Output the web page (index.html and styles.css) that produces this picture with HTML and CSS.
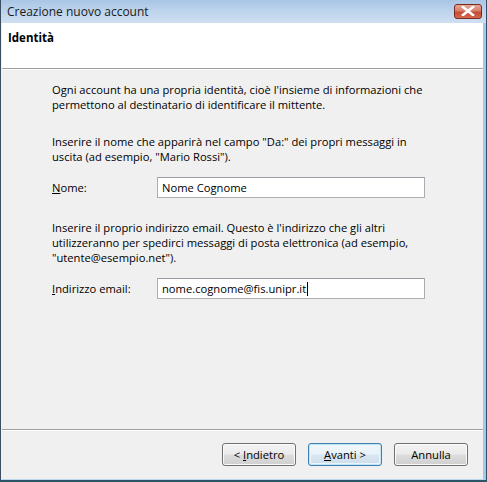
FILE: index.html
```html
<!DOCTYPE html>
<html lang="it">
<head>
<meta charset="utf-8">
<title>Creazione nuovo account</title>
<link rel="stylesheet" href="styles.css">
</head>
<body>
<div class="window">
  <div class="titlebar">
    <span class="title">Creazione nuovo account</span>
    <span class="close" aria-label="Chiudi">
      <svg width="14" height="10" viewBox="0 0 14 10"><path d="M2 1 L12 9 M12 1 L2 9" stroke="#ffffff" stroke-width="2.6" stroke-linecap="square" fill="none"/></svg>
    </span>
  </div>
  <div class="frame">
    <div class="client">
      <div class="header">Identità</div>
      <div class="content">
        <p class="para first">Ogni account ha una propria identità, cioè l'insieme di informazioni che<br>permettono al destinatario di identificare il mittente.</p>
        <p class="para">Inserire il nome che apparirà nel campo "Da:" dei propri messaggi in<br>uscita (ad esempio, "Mario Rossi").</p>
        <div class="field">
          <label class="label"><u>N</u>ome:</label>
          <div class="input">Nome Cognome</div>
        </div>
        <p class="para">Inserire il proprio indirizzo email. Questo è l'indirizzo che gli altri<br>utilizzeranno per spedirci messaggi di posta elettronica (ad esempio,<br>"utente@esempio.net").</p>
        <div class="field field-email">
          <label class="label"><u>I</u>ndirizzo email:</label>
          <div class="input">nome.cognome@fis.unipr.it<span class="caret"></span></div>
        </div>
      </div>
      <div class="footer">
        <button class="btn">&lt; <u>I</u>ndietro</button>
        <button class="btn default"><u>A</u>vanti &gt;</button>
        <button class="btn">Annulla</button>
      </div>
    </div>
  </div>
</div>
</body>
</html>
```

FILE: styles.css
```css
html, body {
  margin: 0;
  padding: 0;
  background: #ffffff;
}

body {
  font-family: "Open Sans", "Noto Sans", sans-serif;
  font-size: 11.2px;
  color: #000000;
}

.window {
  width: 487px;
  height: 482px;
  box-sizing: border-box;
  display: flex;
  flex-direction: column;
  border-left: 1px solid #3b4d60;
  border-right: 1px solid #3b4d60;
  border-bottom: 2px solid #2c5668;
  background: #cfe0f2;
}

.titlebar {
  height: 23px;
  flex: none;
  display: flex;
  align-items: center;
  justify-content: space-between;
  padding: 0 4px 0 6px;
  background: linear-gradient(to bottom, #a9c5e6 0%, #bcd3ec 45%, #cfdff1 100%);
}

.title {
  font-size: 12px;
  color: #1a1a1a;
  line-height: 15px;
}

.close {
  width: 28px;
  height: 15px;
  box-sizing: border-box;
  margin-top: -1px;
  border: 1px solid #7a2a20;
  border-radius: 3px;
  background: linear-gradient(to bottom, #e6a696 0%, #d8806a 45%, #c54a33 55%, #d26a4f 100%);
  display: flex;
  align-items: center;
  justify-content: center;
}

.frame {
  flex: 1;
  display: flex;
  border-left: 1px solid #e9f1fa;
  border-right: 3px solid #9ccbec;
  border-bottom: 1px solid #bcd8ee;
}

.client {
  flex: 1;
  display: flex;
  flex-direction: column;
  background: #f0f0f0;
}

.header {
  height: 46px;
  box-sizing: border-box;
  flex: none;
  background: #ffffff;
  border-bottom: 1px solid #a0a0a0;
  padding: 7px 0 0 6px;
  font-weight: bold;
  font-size: 11.5px;
  line-height: 15px;
}

.content {
  flex: 1;
  padding: 12px 0 0 50px;
  border-top: 1px solid #ffffff;
}

.para {
  margin: 0 0 13px 0;
  line-height: 15px;
  white-space: nowrap;
}

.para.first {
  margin-bottom: 22px;
}

.field {
  display: flex;
  align-items: center;
  margin-bottom: 22px;
}

.field-email {
  margin-bottom: 0;
}

.label {
  width: 105px;
  line-height: 15px;
}

.input {
  width: 268px;
  height: 21px;
  box-sizing: border-box;
  background: #ffffff;
  border: 1px solid #abadb3;
  border-top-color: #9a9ca3;
  padding: 0 0 0 4px;
  line-height: 19px;
  display: flex;
  align-items: center;
}

.caret {
  display: inline-block;
  width: 1px;
  height: 14px;
  background: #000000;
  margin-left: 1px;
}

.footer {
  height: 50px;
  flex: none;
  box-sizing: border-box;
  border-top: 1px solid #a0a0a0;
  box-shadow: inset 0 1px 0 #ffffff;
  display: flex;
  justify-content: flex-end;
  align-items: flex-start;
  gap: 12px;
  padding: 13px 15px 0 0;
}

.btn {
  width: 74px;
  height: 23px;
  box-sizing: border-box;
  font-family: inherit;
  font-size: 11.2px;
  color: #000000;
  border: 1px solid #707070;
  border-radius: 3px;
  background: linear-gradient(to bottom, #f3f3f3 0%, #ebebeb 48%, #dddddd 52%, #cfcfcf 100%);
  box-shadow: inset 0 0 0 1px #fbfbfb;
  padding: 0;
  line-height: 19px;
}

.btn.default {
  border-color: #3c7fb1;
  box-shadow: inset 0 0 0 1px #c2e4f6, inset 0 0 0 2px #e9f6fd;
  background: linear-gradient(to bottom, #f1f7fb 0%, #e8f2f9 48%, #d9e7f1 52%, #cddde9 100%);
}
```
